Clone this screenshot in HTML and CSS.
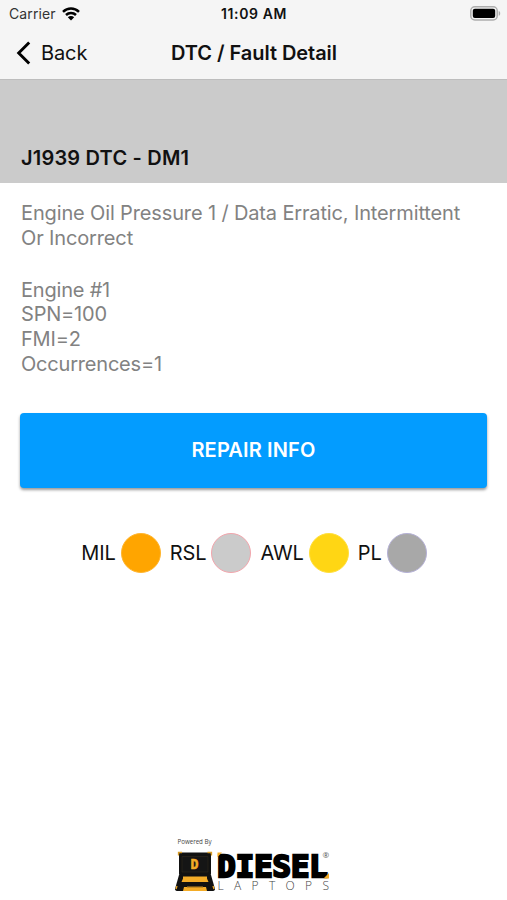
FILE: index.html
```html
<!DOCTYPE html>
<html lang="en">
<head>
    <meta charset="UTF-8">
    <meta name="viewport" content="width=device-width, initial-scale=1.0">
    <title>DTC / Fault Detail</title>
    <link rel="stylesheet" href="styles.css">
</head>
<body>

    <header class="header">
        <div class="status-bar">
            <div class="carrier">
                <span>Carrier</span>
                <svg class="wifi" width="18" height="14" viewBox="0 0 18 14" fill="none" stroke="#000" stroke-width="2.5">
                    <path d="M1 4.8C5.5 .5 12.5 .5 17 4.8"/>
                    <path d="M4 8C6.8 5.3 11.2 5.3 14 8"/>
                    <path d="M9 13.6L5.8 10.3C7.6 8.7 10.4 8.7 12.2 10.3Z" fill="#000" stroke="none"/>
                </svg>
            </div>
            <span class="time">11:09 AM</span>
            <svg class="battery" width="31" height="15" viewBox="0 0 31 15">
                <rect x=".8" y=".8" width="26.4" height="13.2" rx="4" fill="#f5f5f5" stroke="#adadad" stroke-width="1.5"/>
                <rect x="2.8" y="2.8" width="22.4" height="9.2" rx="2" fill="#000"/>
                <path d="M28.7 5C30.7 5.6 30.7 9.2 28.7 9.8Z" fill="#adadad"/>
            </svg>
        </div>
        <nav class="nav-bar">
            <a class="back">
                <svg width="15" height="24" viewBox="0 0 15 24" fill="none" stroke="#000" stroke-width="2.9">
                    <path d="M13.2 1.4L2.7 12L13.2 22.6"/>
                </svg>
                <span>Back</span>
            </a>
            <h1>DTC / Fault Detail</h1>
        </nav>
    </header>

    <div class="section-title">
        <h2>J1939 DTC - DM1</h2>
    </div>

    <main class="content">
        <p class="description">Engine Oil Pressure 1 / Data Erratic, Intermittent<br>Or Incorrect</p>
        <p class="details">
            Engine #1<br>
            SPN=100<br>
            FMI=2<br>
            Occurrences=1
        </p>

        <button class="btn">REPAIR INFO</button>

        <div class="lamps">
            <div class="lamp"><span>MIL</span><i class="dot mil"></i></div>
            <div class="lamp"><span>RSL</span><i class="dot rsl"></i></div>
            <div class="lamp"><span>AWL</span><i class="dot awl"></i></div>
            <div class="lamp"><span>PL</span><i class="dot pl"></i></div>
        </div>
    </main>

    <footer class="footer">
        <svg width="156" height="56" viewBox="174 837 156 56">
            <text class="powered" x="177.5" y="844" textLength="34">Powered By</text>

            <!-- rugged laptop -->
            <rect x="179" y="852.5" width="32" height="23" rx="1.5" fill="#111"/>
            <path d="M178.5 855.5V852.5H182M207.5 852.5H211.5V855.5" fill="none" stroke="#d69a24" stroke-width="1.3"/>
            <path d="M182 856.5H208V872H182Z" fill="#151515" stroke="#30291d" stroke-width=".6"/>
            <path d="M179 875H211L215 889Q215 891 212 891H178Q175 891 175 889Z" fill="#111"/>
            <path d="M183 876.5H207V878.5L208.5 882H181.5L183 878.5Z" fill="#f4ac27"/>
            <path d="M184 887H206L207 891H183Z" fill="#f4ac27"/>
            <path d="M187 886.5H203V888H187Z" fill="#c98c20"/>
            <path d="M177 886L176 889M213 886L214 889" stroke="#f4ac27" stroke-width="1.3"/>
            <text class="badge" x="190.4" y="869.1" textLength="8" lengthAdjust="spacingAndGlyphs">D</text>

            <text class="brand" x="217.3" y="876.5" textLength="110.5" lengthAdjust="spacingAndGlyphs">DIESEL</text>
            <path d="M217.5 857V852.5H222Z" fill="#f4ac27"/>
            <path d="M329 873V878.5H323.5Z" fill="#f4ac27"/>
            <text class="reg" x="322.5" y="858.3">®</text>
            <text class="laptops" x="217.5" y="890" textLength="111.5">LAPTOPS</text>
        </svg>
    </footer>

</body>
</html>
```
FILE: styles.css
```css
* {
    box-sizing: border-box;
}

body {
    font-family: Inter, "Liberation Sans", sans-serif;
    background-color: #fff;
    color: #111;
    margin: 0;
    height: 900px;
    display: flex;
    flex-direction: column;
    overflow: hidden;
}

h1, h2, p {
    margin: 0;
}

svg {
    display: block;
    flex: none;
}

.header {
    height: 80px;
    background-color: #f5f5f5;
    border-bottom: 1px solid #bdbdbd;
}

.status-bar {
    height: 27px;
    display: grid;
    grid-template-columns: 1fr auto 1fr;
    align-items: center;
    padding: 0 6px 0 9px;
    font-size: 14px;
}

.carrier {
    display: flex;
    align-items: center;
    gap: 6px;
    color: #333;
    letter-spacing: 0.1px;
}

.time {
    font-size: 14px;
    font-weight: 600;
    letter-spacing: 0.6px;
    margin-right: 2px;
}

.battery {
    justify-self: end;
}

.nav-bar {
    height: 51px;
    display: grid;
    grid-template-columns: 1fr auto 1fr;
    align-items: center;
    padding: 0 15px 0 16px;
}

.back {
    display: flex;
    align-items: center;
    gap: 10px;
    font-size: 20px;
    letter-spacing: -0.1px;
}

h1 {
    font-size: 20px;
    font-weight: 600;
    letter-spacing: -0.05px;
}

.section-title {
    height: 103px;
    background-color: #cbcbcb;
    display: flex;
    align-items: flex-end;
    padding: 0 21px 13px;
}

h2 {
    font-size: 20px;
    line-height: 24px;
    font-weight: 600;
    letter-spacing: 0.2px;
}

.content {
    padding: 18px 20px 0;
    flex: 1;
}

.description, .details {
    padding-left: 1px;
    font-size: 20px;
    line-height: 24.8px;
    color: #828282;
    letter-spacing: -0.14px;
    white-space: nowrap;
}

.details {
    margin-top: 27px;
    letter-spacing: -0.2px;
}

.btn {
    display: block;
    width: 467px;
    height: 75px;
    margin-top: 36px;
    padding: 0;
    border: none;
    border-radius: 4px;
    background-color: #039cff;
    box-shadow: 0 2px 3px rgba(0, 0, 0, 0.4);
    color: #fff;
    font-family: inherit;
    font-size: 20px;
    font-weight: 600;
    letter-spacing: 0.15px;
}

.lamps {
    display: flex;
    justify-content: center;
    gap: 9px;
    margin-top: 45px;
    padding-left: 1px;
}

.lamp {
    display: flex;
    align-items: center;
    gap: 5px;
    font-size: 20px;
    letter-spacing: -0.1px;
}

.dot {
    width: 40px;
    height: 40px;
    border-radius: 50%;
    border: 1px solid transparent;
}

.mil {
    background-color: #ffa500;
    border-color: #ffb52e;
}

.rsl {
    background-color: #cbcbcb;
    border-color: #f2a5ac;
}

.awl {
    background-color: #ffd614;
    border-color: #ffdf3d;
}

.pl {
    background-color: #a8a8a8;
    border-color: #b5b1d6;
}

.footer {
    height: 63px;
    padding-left: 174px;
}

.powered {
    font-family: "Open Sans", sans-serif;
    font-size: 6.2px;
    fill: #444;
}

.badge {
    font: bold 14px "DejaVu Sans Mono", monospace;
    fill: #f4ac27;
    stroke: #f4ac27;
    stroke-width: 0.6px;
}

.brand {
    font: bold 30.5px "DejaVu Sans Mono", monospace;
    fill: #000;
    stroke: #000;
    stroke-width: 2.4px;
}

.reg {
    font-family: "Open Sans", sans-serif;
    font-size: 8px;
    fill: #555;
}

.laptops {
    font-family: "Open Sans", sans-serif;
    font-size: 12px;
    font-weight: 300;
    fill: #444;
}
```
